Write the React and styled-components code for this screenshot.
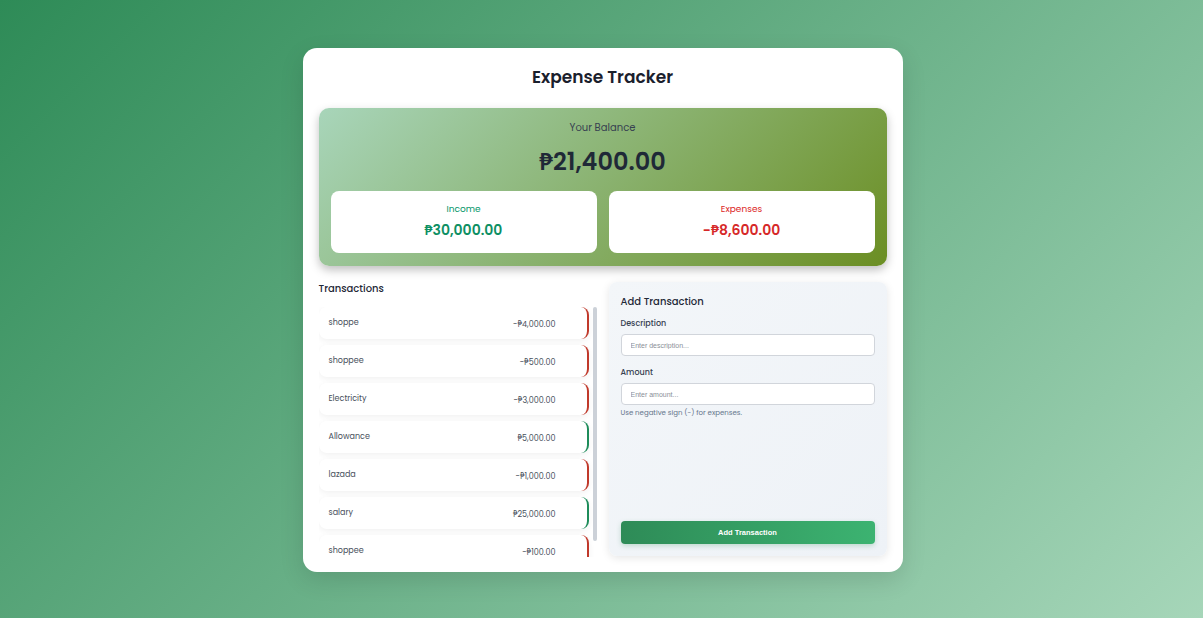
import React, { useState } from "react";
import styled, { createGlobalStyle } from "styled-components";

const GlobalStyle = createGlobalStyle`
  * { box-sizing: border-box; }
  html, body { margin: 0; padding: 0; }
  body {
    font-family: "Poppins", "Open Sans", "Noto Sans", sans-serif;
    background: linear-gradient(135deg, #2e8b57 0%, #a6d6b9 100%);
    min-height: 618px;
  }
`;

const Page = styled.div`
  min-height: 618px;
  display: flex;
  justify-content: center;
  padding: 48px 0 0 2px;
`;

const Card = styled.div`
  width: 600px;
  height: 524px;
  background: #fff;
  border-radius: 14px;
  padding: 16px;
  box-shadow: 0 8px 24px rgba(0, 0, 0, 0.12);
  display: flex;
  flex-direction: column;
`;

const Title = styled.h1`
  margin: 0;
  text-align: center;
  font-size: 17px;
  font-weight: 600;
  color: #1a202c;
  line-height: 26px;
  margin-bottom: 18px;
`;

const BalanceBox = styled.div`
  border-radius: 10px;
  background: linear-gradient(135deg, #a8d5ba 0%, #6b8e23 100%);
  box-shadow: 0 4px 10px rgba(0, 0, 0, 0.25);
  padding: 13px 12px 13px;
  text-align: center;
`;

const BalanceLabel = styled.div`
  font-size: 10px;
  color: #374151;
  line-height: 14px;
`;

const BalanceAmount = styled.div`
  font-size: 24px;
  font-weight: 600;
  color: #1f2937;
  line-height: 34px;
  margin: 10px 0 12px;
`;

const Summary = styled.div`
  display: grid;
  grid-template-columns: 1fr 1fr;
  gap: 12px;
`;

const SummaryCard = styled.div`
  background: #fff;
  border-radius: 8px;
  height: 62px;
  padding-bottom: 2px;
  display: flex;
  flex-direction: column;
  align-items: center;
  justify-content: center;
  color: ${(p) => (p.$type === "income" ? "#059669" : "#dc2626")};
`;

const SummaryLabel = styled.div`
  font-size: 9px;
  line-height: 13px;
`;

const SummaryValue = styled.div`
  font-size: 14px;
  font-weight: 600;
  line-height: 20px;
  margin-top: 4px;
  color: ${(p) => (p.$type === "income" ? "#0d8f63" : "#d62828")};
`;

const Columns = styled.div`
  display: grid;
  grid-template-columns: 1fr 1fr;
  gap: 12px;
  margin-top: 15px;
  flex: 1;
  min-height: 0;
`;

const HistorySection = styled.div`
  display: flex;
  flex-direction: column;
  min-height: 0;
`;

const SectionTitle = styled.h3`
  margin: 0;
  font-size: 10px;
  font-weight: 500;
  color: #1f2937;
  line-height: 16px;
  margin-bottom: 10px;
`;

const ListWrap = styled.div`
  position: relative;
  height: 250px;
`;

const List = styled.ul`
  list-style: none;
  margin: 0;
  padding: 0 8px 0 0;
  height: 100%;
  overflow-y: auto;
  scrollbar-width: none;

  &::-webkit-scrollbar { display: none; }
`;

const ScrollThumb = styled.div`
  position: absolute;
  top: 0;
  right: 0;
  width: 4px;
  height: 234px;
  border-radius: 2px;
  background: #ccd1d8;
`;

const Item = styled.li`
  display: flex;
  align-items: center;
  justify-content: space-between;
  height: 32px;
  margin-bottom: 6px;
  padding: 0 31px 0 10px;
  background: #fff;
  border-radius: 8px;
  border-right: 2px solid ${(p) => (p.$negative ? "#c0392b" : "#1e8c5a")};
  box-shadow: 0 2px 6px rgba(0, 0, 0, 0.06);
  font-size: 8px;
  color: #48505c;
`;

const ItemAmount = styled.span`
  margin-top: 3px;
`;

const FormPanel = styled.form`
  background: linear-gradient(135deg, #f3f6f9 0%, #eef2f7 100%);
  border-radius: 8px;
  box-shadow: 0 2px 8px rgba(0, 0, 0, 0.1);
  padding: 12px;
  display: flex;
  flex-direction: column;
  margin-top: 1px;
`;

const FormTitle = styled.h3`
  margin: 0 0 8px;
  font-size: 10px;
  font-weight: 500;
  color: #1f2937;
  line-height: 16px;
`;

const Label = styled.label`
  font-size: 8px;
  font-weight: 500;
  color: #374151;
  line-height: 12px;
  margin-bottom: 4px;
  margin-top: ${(p) => p.$top || 0}px;
`;

const Input = styled.input`
  width: 100%;
  height: 22px;
  border: 1px solid #d1d5db;
  border-radius: 4px;
  background: #fff;
  padding: 0 9px;
  font-family: "Liberation Sans", Arial, sans-serif;
  font-size: 7px;
  color: #111827;
  outline: none;

  &::placeholder { color: #8a8f98; }
`;

const Hint = styled.small`
  font-size: 7px;
  color: #64748b;
  margin-top: 3px;
  line-height: 10px;
`;

const Button = styled.button`
  margin-top: auto;
  height: 23px;
  border: none;
  border-radius: 4px;
  background: linear-gradient(90deg, #2e8b57 0%, #3cb371 100%);
  color: #fff;
  font-family: "Liberation Sans", Arial, sans-serif;
  font-size: 7.5px;
  font-weight: 700;
  cursor: pointer;
  box-shadow: 0 2px 5px rgba(46, 139, 87, 0.25);
`;

const transactions = [
  { id: 1, text: "shoppe", amount: -4000 },
  { id: 2, text: "shoppee", amount: -500 },
  { id: 3, text: "Electricity", amount: -3000 },
  { id: 4, text: "Allowance", amount: 5000 },
  { id: 5, text: "lazada", amount: -1000 },
  { id: 6, text: "salary", amount: 25000 },
  { id: 7, text: "shoppee", amount: -100 },
];

const fmt = (n) =>
  (n < 0 ? "-" : "") +
  "₱" +
  Math.abs(n).toLocaleString("en-US", { minimumFractionDigits: 2, maximumFractionDigits: 2 });

export default function App() {
  const [text, setText] = useState("");
  const [amount, setAmount] = useState("");

  const total = transactions.reduce((s, t) => s + t.amount, 0);
  const income = transactions.filter((t) => t.amount > 0).reduce((s, t) => s + t.amount, 0);
  const expense = transactions.filter((t) => t.amount < 0).reduce((s, t) => s + t.amount, 0);

  return (
    <>
      <GlobalStyle />
      <Page>
        <Card>
          <Title>Expense Tracker</Title>
          <BalanceBox>
            <BalanceLabel>Your Balance</BalanceLabel>
            <BalanceAmount>{fmt(total)}</BalanceAmount>
            <Summary>
              <SummaryCard $type="income">
                <SummaryLabel>Income</SummaryLabel>
                <SummaryValue $type="income">{fmt(income)}</SummaryValue>
              </SummaryCard>
              <SummaryCard $type="expense">
                <SummaryLabel>Expenses</SummaryLabel>
                <SummaryValue $type="expense">{fmt(expense)}</SummaryValue>
              </SummaryCard>
            </Summary>
          </BalanceBox>
          <Columns>
            <HistorySection>
              <SectionTitle>Transactions</SectionTitle>
              <ListWrap>
                <List>
                  {transactions.map((t) => (
                    <Item key={t.id} $negative={t.amount < 0}>
                      <span>{t.text}</span>
                      <ItemAmount>{fmt(t.amount)}</ItemAmount>
                    </Item>
                  ))}
                </List>
                <ScrollThumb />
              </ListWrap>
            </HistorySection>
            <FormPanel onSubmit={(e) => e.preventDefault()}>
              <FormTitle>Add Transaction</FormTitle>
              <Label htmlFor="desc">Description</Label>
              <Input
                id="desc"
                placeholder="Enter description..."
                value={text}
                onChange={(e) => setText(e.target.value)}
              />
              <Label htmlFor="amt" $top={11}>Amount</Label>
              <Input
                id="amt"
                placeholder="Enter amount..."
                value={amount}
                onChange={(e) => setAmount(e.target.value)}
              />
              <Hint>Use negative sign (−) for expenses.</Hint>
              <Button type="submit">Add Transaction</Button>
            </FormPanel>
          </Columns>
        </Card>
      </Page>
    </>
  );
}
